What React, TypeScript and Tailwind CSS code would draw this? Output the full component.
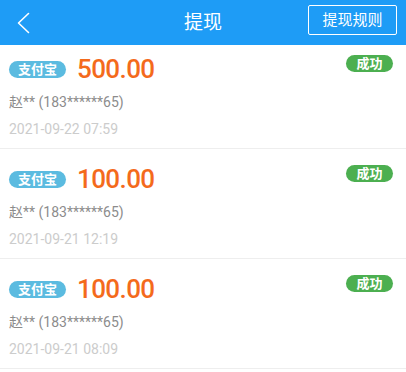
import React from "react";

const items = [
  { amount: "500.00", name: "赵** (183******65)", date: "2021-09-22 07:59" },
  { amount: "100.00", name: "赵** (183******65)", date: "2021-09-21 12:19" },
  { amount: "100.00", name: "赵** (183******65)", date: "2021-09-21 08:09" },
];

const font = { fontFamily: 'Roboto, "Noto Sans CJK SC", sans-serif' };

export default function App() {
  return (
    <div className="w-[406px] h-[372px] bg-white overflow-hidden flex flex-col" style={font}>
      <div className="h-[45px] shrink-0 bg-[#1e9cf6] flex items-center justify-between relative z-10 pl-[16px] pr-[9px]">
        <svg width="14" height="22" viewBox="0 0 14 22" fill="none">
          <path d="M12.5 1.5 L2.5 11 L12.5 20.5" stroke="white" strokeWidth="1.6" strokeLinecap="round" strokeLinejoin="round" />
        </svg>
        <div className="absolute left-0 right-0 top-0 h-[45px] flex items-center justify-center pointer-events-none">
          <span className="text-white text-[19px] leading-none">提现</span>
        </div>
        <div className="h-[30px] w-[89px] border border-white rounded-[2px] flex items-center justify-center text-white text-[15px] leading-none mt-[-5px]">
          提现规则
        </div>
      </div>
      <div className="flex-1 overflow-hidden">
        <div className="mt-[-6px]">
          {items.map((it, i) => (
            <div key={i} className="border-b border-[#eeeeee] pl-[9px] pr-[13px] pt-[15px] h-[110px]">
              <div className="h-[30px] flex items-center">
                <span className="h-[17px] w-[57px] rounded-full bg-[#5bbbe0] text-white text-[13px] font-bold flex items-center justify-center leading-none">
                  支付宝
                </span>
                <span className="ml-[11px] text-[26px] font-medium text-[#f46a1c] leading-none tracking-[-0.6px]">
                  {it.amount}
                </span>
                <span className="ml-auto self-start mt-[1px] h-[17px] w-[47px] rounded-full bg-[#4caf50] text-white text-[13px] font-bold flex items-center justify-center leading-none">
                  成功
                </span>
              </div>
              <div className="mt-[8px] h-[20px] leading-[20px] text-[14px] text-[#8c8c8c]">{it.name}</div>
              <div className="mt-[7px] h-[20px] leading-[20px] text-[14px] text-[#cccccc]">{it.date}</div>
            </div>
          ))}
        </div>
      </div>
    </div>
  );
}
